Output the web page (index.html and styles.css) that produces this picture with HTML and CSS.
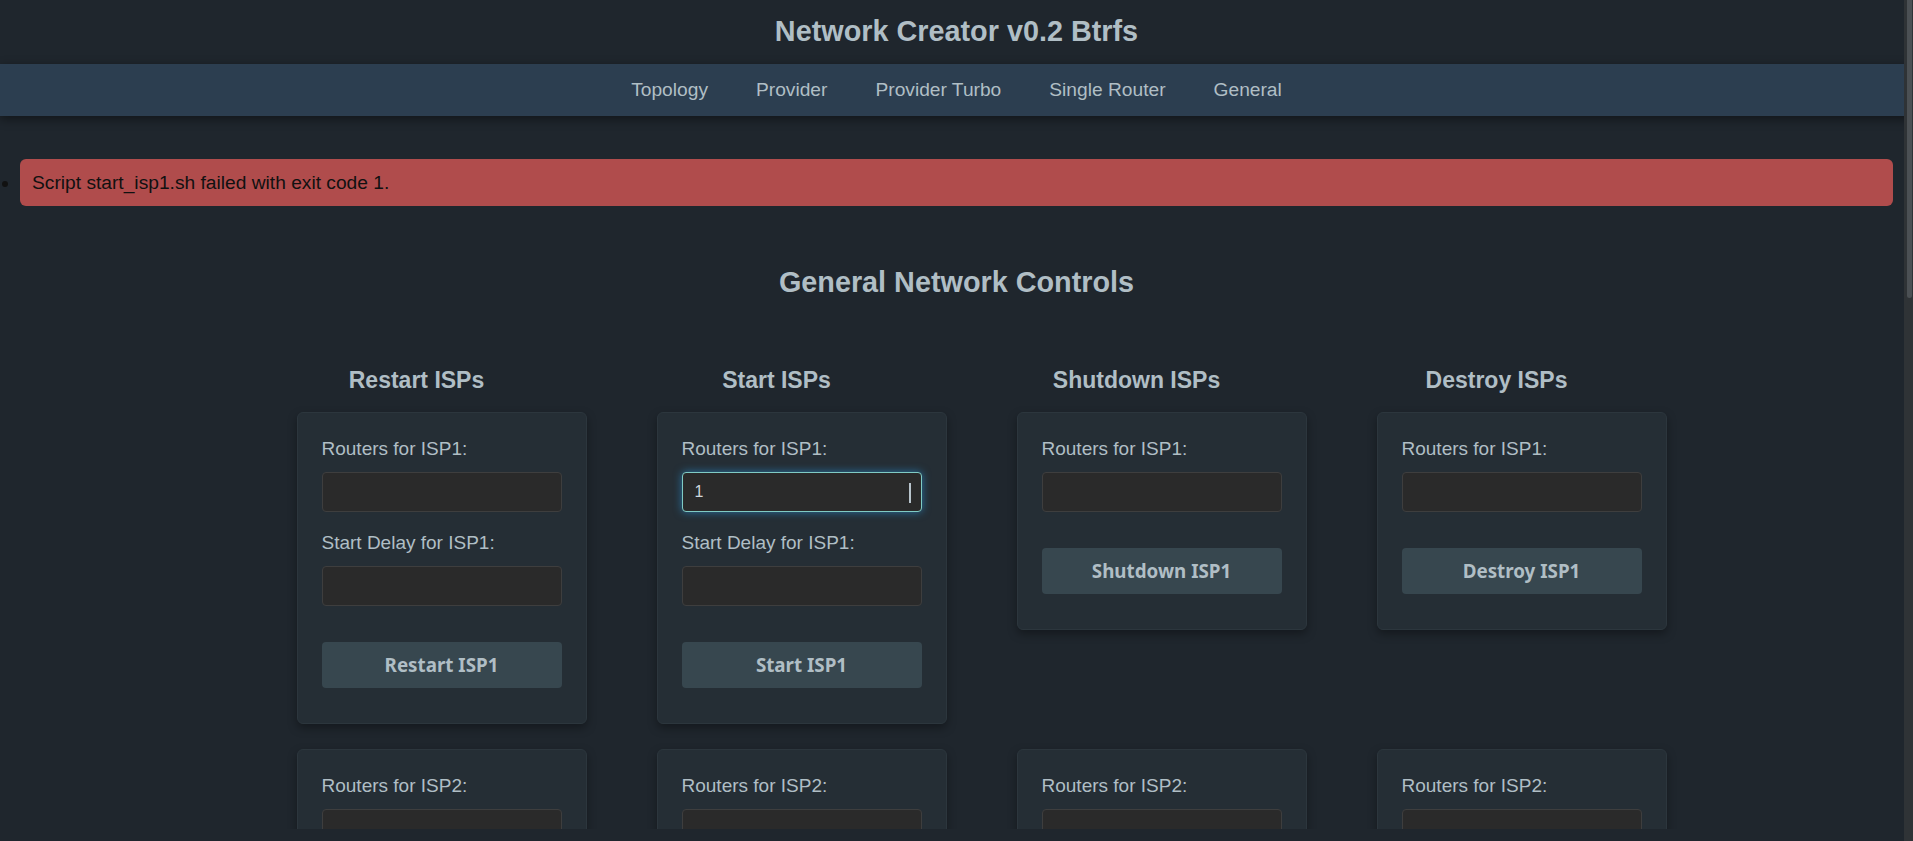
FILE: index.html
```html
<!DOCTYPE html>
<html lang="en">
<head>
<meta charset="utf-8">
<title>Network Creator v0.2 Btrfs</title>
<link rel="stylesheet" href="styles.css">
</head>
<body>
<div class="page">
  <header class="site-header">
    <h1 class="site-title">Network Creator v0.2 Btrfs</h1>
  </header>
  <nav class="main-nav">
    <a class="nav-link" href="#">Topology</a>
    <a class="nav-link" href="#">Provider</a>
    <a class="nav-link" href="#">Provider Turbo</a>
    <a class="nav-link" href="#">Single Router</a>
    <a class="nav-link" href="#">General</a>
  </nav>
  <main class="content">
    <ul class="messages">
      <li class="message message-error">Script start_isp1.sh failed with exit code 1.</li>
    </ul>
    <h2 class="section-title">General Network Controls</h2>
    <div class="controls-grid">
      <h3 class="col-title">Restart ISPs</h3>
      <h3 class="col-title">Start ISPs</h3>
      <h3 class="col-title">Shutdown ISPs</h3>
      <h3 class="col-title">Destroy ISPs</h3>

      <form class="card">
        <label class="field-label">Routers for ISP1:</label>
        <input class="field-input" type="text">
        <label class="field-label">Start Delay for ISP1:</label>
        <input class="field-input" type="text">
        <button class="action-btn" type="button">Restart ISP1</button>
      </form>
      <form class="card">
        <label class="field-label">Routers for ISP1:</label>
        <div class="field-wrap">
          <input class="field-input field-focused" type="text" value="1">
          <span class="ibeam"></span>
        </div>
        <label class="field-label">Start Delay for ISP1:</label>
        <input class="field-input" type="text">
        <button class="action-btn" type="button">Start ISP1</button>
      </form>
      <form class="card">
        <label class="field-label">Routers for ISP1:</label>
        <input class="field-input" type="text">
        <button class="action-btn" type="button">Shutdown ISP1</button>
      </form>
      <form class="card">
        <label class="field-label">Routers for ISP1:</label>
        <input class="field-input" type="text">
        <button class="action-btn" type="button">Destroy ISP1</button>
      </form>

      <form class="card">
        <label class="field-label">Routers for ISP2:</label>
        <input class="field-input" type="text">
        <label class="field-label">Start Delay for ISP2:</label>
        <input class="field-input" type="text">
        <button class="action-btn" type="button">Restart ISP2</button>
      </form>
      <form class="card">
        <label class="field-label">Routers for ISP2:</label>
        <input class="field-input" type="text">
        <label class="field-label">Start Delay for ISP2:</label>
        <input class="field-input" type="text">
        <button class="action-btn" type="button">Start ISP2</button>
      </form>
      <form class="card">
        <label class="field-label">Routers for ISP2:</label>
        <input class="field-input" type="text">
        <button class="action-btn" type="button">Shutdown ISP2</button>
      </form>
      <form class="card">
        <label class="field-label">Routers for ISP2:</label>
        <input class="field-input" type="text">
        <button class="action-btn" type="button">Destroy ISP2</button>
      </form>
    </div>
  </main>
</div>
<div class="scrollbar"><div class="scrollbar-thumb"></div></div>
</body>
</html>
```
FILE: styles.css
```css
html {
  overflow: hidden;
  background: #1f262d;
}
body {
  margin: 0;
  background: #1f262d;
  color: #b0bec5;
  font-family: "Liberation Sans", Arial, sans-serif;
}
.page {
  height: calc(100vh - 12px);
  overflow: hidden;
}
.site-header {
  background: #1f262d;
  padding: 15px 0 16px;
  text-align: center;
}
.site-title {
  margin: 0;
  font-size: 28.8px;
  line-height: 33px;
  font-weight: 700;
  color: #b0bec5;
}
.main-nav {
  position: relative;
  z-index: 1;
  height: 52px;
  background: #2c3e50;
  display: flex;
  justify-content: center;
  align-items: center;
  gap: 48px;
  box-shadow: 0 3px 10px rgba(0, 0, 0, 0.45);
}
.nav-link {
  color: #b0bec5;
  text-decoration: none;
  font-size: 19.2px;
  line-height: 22px;
}
.content {
  padding: 0 20px;
}
.messages {
  margin: 43px 0 0;
  padding: 0;
  list-style: disc outside;
  color: #000;
}
.message {
  padding: 12px;
  font-size: 19.2px;
  line-height: 23px;
  border-radius: 6px;
}
.message-error {
  background: #b04c4c;
  color: #111;
}
.section-title {
  margin: 60px 0 0;
  text-align: center;
  font-size: 28.8px;
  line-height: 33px;
  font-weight: 700;
  color: #b0bec5;
}
.controls-grid {
  margin-top: 68px;
  display: grid;
  grid-template-columns: repeat(4, 240px);
  column-gap: 120px;
  row-gap: 25px;
  justify-content: center;
  align-items: start;
}
.col-title {
  margin: 0 0 -6px;
  text-align: center;
  font-size: 23px;
  line-height: 26px;
  font-weight: 700;
  color: #b0bec5;
}
.card {
  box-sizing: content-box;
  width: 100%;
  justify-self: start;
  margin: 0;
  display: flex;
  flex-direction: column;
  padding: 25px 24px 24px;
  background: #252e35;
  border: 1px solid #2c363d;
  border-radius: 6px;
  box-shadow: 0 4px 10px rgba(0, 0, 0, 0.35);
}
.field-label {
  display: block;
  font-size: 19px;
  line-height: 22px;
  margin-bottom: 12px;
  color: #b0bec5;
}
.field-wrap {
  position: relative;
  margin-bottom: 20px;
}
.field-input {
  display: block;
  box-sizing: border-box;
  width: 100%;
  height: 40px;
  margin: 0 0 20px;
  padding: 0 12px;
  background: #2a2a2a;
  border: 1px solid #3e3e3e;
  border-radius: 4px;
  color: #cfd8dc;
  font-family: "Liberation Sans", Arial, sans-serif;
  font-size: 16px;
  outline: none;
}
.field-wrap .field-input {
  margin-bottom: 0;
}
.field-focused {
  border-color: #80cbc4;
  box-shadow: 0 0 8px rgba(41, 150, 220, 0.65);
}
.ibeam {
  position: absolute;
  right: 11px;
  top: 11px;
  width: 2px;
  height: 20px;
  background: #b8c4cc;
}
.action-btn {
  margin: 16px 0 11px;
  height: 46px;
  width: 100%;
  border: none;
  border-radius: 4px;
  background: #37474f;
  color: #b0bec5;
  font-family: "Noto Sans", "Open Sans", sans-serif;
  font-weight: 700;
  font-size: 18.8px;
}
.scrollbar {
  position: fixed;
  top: 0;
  right: 0;
  bottom: 0;
  width: 9px;
  background: #2f3336;
  z-index: 5;
}
.scrollbar-thumb {
  position: absolute;
  top: 0;
  left: 3px;
  width: 5px;
  height: 298px;
  background: #4b5054;
  border-radius: 0 0 3px 3px;
}
```
